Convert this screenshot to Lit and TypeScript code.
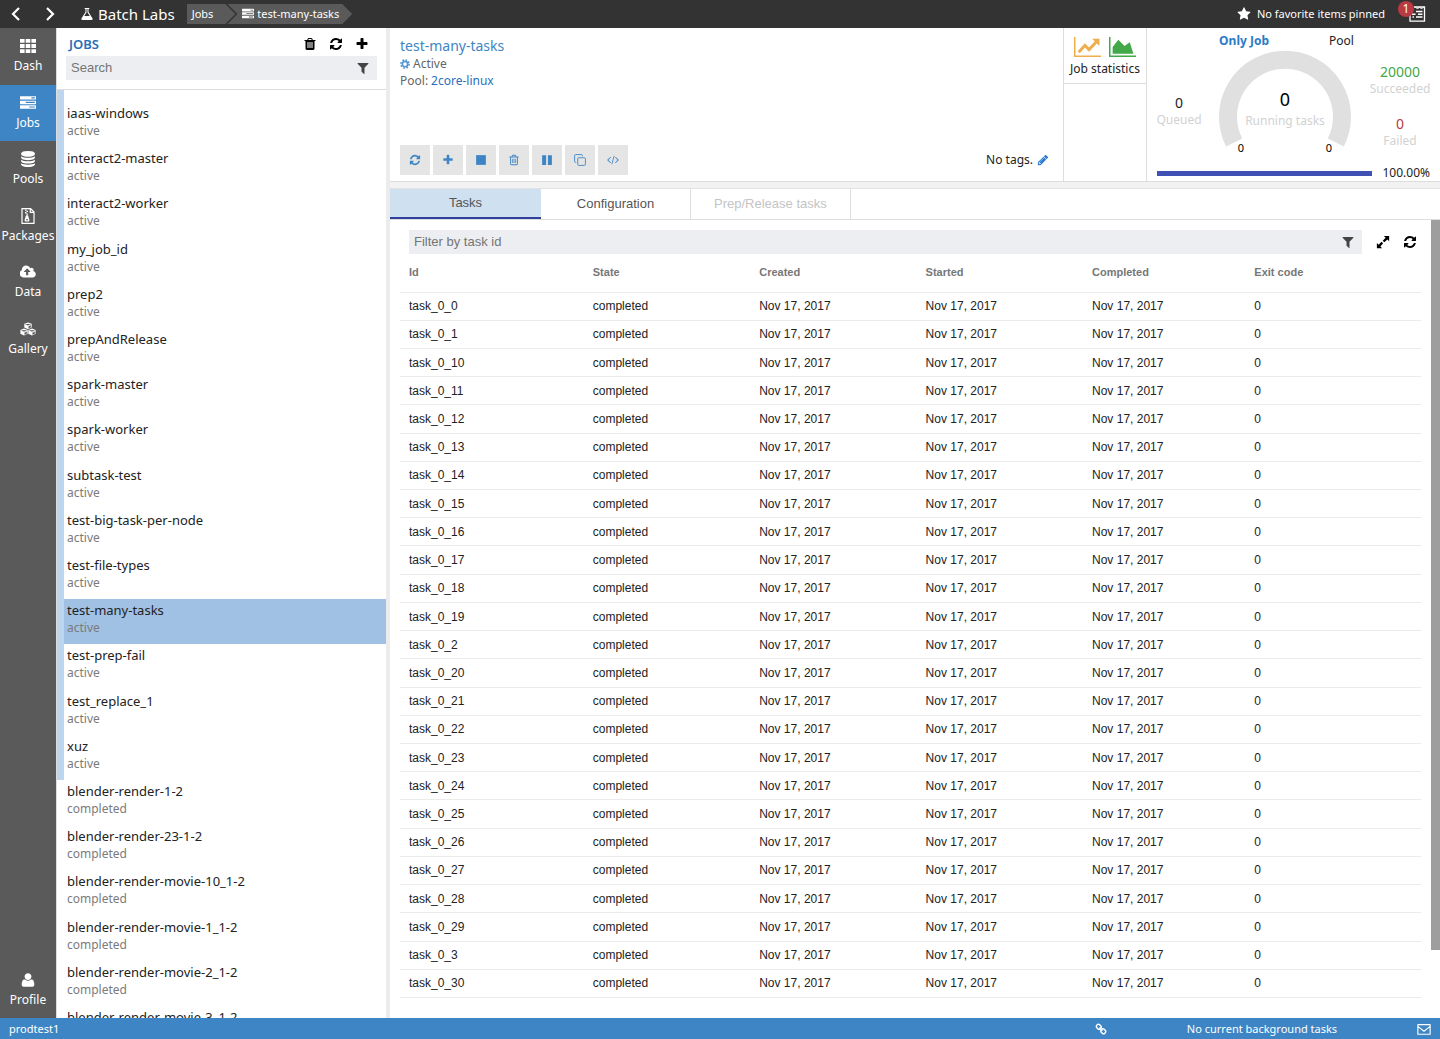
import { LitElement, html, css, svg, nothing } from "lit";
import { customElement, property } from "lit/decorators.js";
import { classMap } from "lit/directives/class-map.js";

const icons: Record<string, { box: string; body: unknown }> = {
  back: { box: "0 0 16 16", body: svg`<path d="M11 2L5 8l6 6" fill="none" stroke="currentColor" stroke-width="2.2"/>` },
  forward: { box: "0 0 16 16", body: svg`<path d="M5 2l6 6-6 6" fill="none" stroke="currentColor" stroke-width="2.2"/>` },
  flask: { box: "0 0 1792 1792", body: svg`<path d="M1591 1448q56 89 21.500 152.500t-140.500 63.500h-1152q-106 0-140.500-63.500t21.500-152.500l503-793v-399h-64q-26 0-45-19t-19-45 19-45 45-19h512q26 0 45 19t19 45-19 45-45 19h-64v399zm-779-725l-272 429h712l-272-429-20-31v-436h-128v436z"/>` },
  tasks: { box: "0 0 1792 1792", body: svg`<path d="M1024 1408h640v-128h-640v128zm-384-512h1024v-128h-1024v128zm640-512h384v-128h-384v128zm512 832v256q0 26-19 45t-45 19h-1664q-26 0-45-19t-19-45v-256q0-26 19-45t45-19h1664q26 0 45 19t19 45zm0-512v256q0 26-19 45t-45 19h-1664q-26 0-45-19t-19-45v-256q0-26 19-45t45-19h1664q26 0 45 19t19 45zm0-512v256q0 26-19 45t-45 19h-1664q-26 0-45-19t-19-45v-256q0-26 19-45t45-19h1664q26 0 45 19t19 45z"/>` },
  star: { box: "0 0 1792 1792", body: svg`<path d="M1728 647q0 22-26 48l-363 354 86 500q1 7 1 20 0 21-10.500 35.500t-30.500 14.500q-19 0-40-12l-449-236-449 236q-22 12-40 12-21 0-31.500-14.500t-10.500-35.500q0-6 2-20l86-500-364-354q-25-27-25-48 0-37 56-46l502-73 225-455q19-41 49-41t49 41l225 455 502 73q56 9 56 46z"/>` },
  news: { box: "0 0 18 18", body: svg`<g fill="none" stroke="currentColor" stroke-width="1.300"><path d="M2 9v7.200h14.500V2H6"/><path d="M8 6.500h6.500M10 9.300h4.500M8 12.100h6.500" stroke-width="1.500"/><path d="M4 9.300h3.500M4.500 12.100h1.500" stroke-width="1.500"/><path d="M7.500 2l2 2 2-2 2 2 2-2" stroke-width="1"/></g>` },
  th: { box: "0 0 16 16", body: svg`<path d="M0 1h4.600v3.800H0zM5.700 1h4.600v3.800H5.700zM11.400 1H16v3.800h-4.600zM0 6.100h4.600v3.800H0zM5.700 6.100h4.600v3.800H5.700zM11.400 6.100H16v3.800h-4.600zM0 11.200h4.600V15H0zM5.700 11.200h4.600V15H5.700zM11.400 11.200H16V15h-4.600z"/>` },
  database: { box: "0 0 1792 1792", body: svg`<path d="M896 768q237 0 443-43t325-127v170q0 69-103 128t-280 93.500-385 34.500-385-34.500-280-93.500-103-128v-170q119 84 325 127t443 43zm0 768q237 0 443-43t325-127v170q0 69-103 128t-280 93.500-385 34.500-385-34.500-280-93.500-103-128v-170q119 84 325 127t443 43zm0-384q237 0 443-43t325-127v170q0 69-103 128t-280 93.500-385 34.500-385-34.500-280-93.500-103-128v-170q119 84 325 127t443 43zm0-1152q208 0 385 34.500t280 93.500 103 128v128q0 69-103 128t-280 93.500-385 34.500-385-34.500-280-93.500-103-128v-128q0-69 103-128t280-93.500 385-34.500z"/>` },
  archive: { box: "0 0 16 16", body: svg`<path d="M2 .6h8.600L14 4v11.400H2zM10.300.8v3.600H14" fill="none" stroke="currentColor" stroke-width="1.200"/><path d="M5 1.500h1.500v1.300H5zM6.500 2.800H8v1.300H6.500zM5 4.100h1.500v1.300H5zM6.500 5.400H8v1.300H6.500zM6 7.200h2l1.300 4.200a1.500 1.500 0 0 1-1.500 2.200H6.200a1.500 1.500 0 0 1-1.500-2.200zM6 11.300h2v1H6z" fill-rule="evenodd"/>` },
  cloud: { box: "-20 0 1900 1792", body: svg`<path d="M1216 864q0-14-9-23l-352-352q-9-9-23-9t-23 9l-351 351q-10 12-10 24 0 14 9 23t23 9h224v352q0 13 9.500 22.500t22.500 9.500h192q13 0 22.500-9.500t9.500-22.500v-352h224q13 0 22.500-9.500t9.500-22.500zm640 288q0 159-112.500 271.500t-271.500 112.500h-1088q-185 0-316.500-131.500t-131.500-316.500q0-130 70-240t188-165q-2-30-2-43 0-212 150-362t362-150q156 0 285.500 87t188.500 231q71-62 166-62 106 0 181 75t75 181q0 76-41 138 130 31 213.500 135.500t83.500 238.500z"/>` },
  cubes: { box: "0 0 16 16", body: svg`<path d="M8 1.400l3.700 1.400v3.700L8 8.300 4.300 6.500V2.800zM4 7.400l3.700 1.500v3.800L4 14.500.4 12.700V8.900zM12 7.400l3.600 1.500v3.800L12 14.500l-3.700-1.800V8.900z"/><path d="M5.200 3.100L8 4.300l2.800-1.200M1.300 9.200L4 10.400l2.700-1.200M9.300 9.200l2.700 1.200 2.700-1.200M8.700 5.600v1.700l2-1V4.600zM4.700 11.800v1.700l2-1v-1.700zM12.700 11.800v1.700l2-1v-1.700z" fill="#5a5a5a" stroke="#5a5a5a" stroke-width=".4"/>` },
  user: { box: "0 0 1792 1792", body: svg`<path d="M1600 1405q0 120-73 189.500t-194 69.500h-874q-121 0-194-69.500t-73-189.500q0-53 3.500-103.500t14-109 26.500-108.500 43-97.500 62-81 85.500-53.500 111.500-20q9 0 42 21.500t74.500 48 108 48 133.500 21.500 133.500-21.500 108-48 74.500-48 42-21.500q61 0 111.500 20t85.500 53.500 62 81 43 97.500 26.500 108.500 14 109 3.500 103.500zm-320-893q0 159-112.500 271.500t-271.500 112.500-271.500-112.500-112.500-271.500 112.500-271.500 271.500-112.500 271.500 112.500 112.500 271.500z"/>` },
  trash: { box: "0 0 1792 1792", body: svg`<path d="M704 1376v-704q0-14-9-23t-23-9h-64q-14 0-23 9t-9 23v704q0 14 9 23t23 9h64q14 0 23-9t9-23zm256 0v-704q0-14-9-23t-23-9h-64q-14 0-23 9t-9 23v704q0 14 9 23t23 9h64q14 0 23-9t9-23zm256 0v-704q0-14-9-23t-23-9h-64q-14 0-23 9t-9 23v704q0 14 9 23t23 9h64q14 0 23-9t9-23zm-544-992h448l-48-117q-7-9-17-11h-317q-10 2-17 11zm928 32v64q0 14-9 23t-23 9h-96v948q0 83-47 143.500t-113 60.500h-832q-66 0-113-58.500t-47-141.500v-952h-96q-14 0-23-9t-9-23v-64q0-14 9-23t23-9h309l70-167q15-37 54-63t79-26h320q40 0 79 26t54 63l70 167h309q14 0 23 9t9 23z"/>` },
  trashOpen: { box: "0 0 1792 1792", body: svg`<path d="M704 736v576q0 14-9 23t-23 9h-64q-14 0-23-9t-9-23v-576q0-14 9-23t23-9h64q14 0 23 9t9 23zm256 0v576q0 14-9 23t-23 9h-64q-14 0-23-9t-9-23v-576q0-14 9-23t23-9h64q14 0 23 9t9 23zm256 0v576q0 14-9 23t-23 9h-64q-14 0-23-9t-9-23v-576q0-14 9-23t23-9h64q14 0 23 9t9 23zm128 724v-948h-896v948q0 22 7 40.500t14.500 27 10.500 8.500h832q3 0 10.500-8.500t14.500-27 7-40.500zm-672-1076h448l-48-117q-7-9-17-11h-317q-10 2-17 11zm928 32v64q0 14-9 23t-23 9h-96v948q0 83-47 143.500t-113 60.500h-832q-66 0-113-58.500t-47-141.500v-952h-96q-14 0-23-9t-9-23v-64q0-14 9-23t23-9h309l70-167q15-37 54-63t79-26h320q40 0 79 26t54 63l70 167h309q14 0 23 9t9 23z"/>` },
  refresh: { box: "0 0 1792 1792", body: svg`<path d="M1639 1056q0 5-1 7-64 268-268 434.500t-478 166.500q-146 0-282.500-55t-243.500-157l-129 129q-19 19-45 19t-45-19-19-45v-448q0-26 19-45t45-19h448q26 0 45 19t19 45-19 45l-137 137q71 66 161 102t187 36q134 0 250-65t186-179q11-17 53-117 8-23 30-23h192q13 0 22.500 9.500t9.500 22.500zm25-800v448q0 26-19 45t-45 19h-448q-26 0-45-19t-19-45 19-45l138-138q-148-137-349-137-134 0-250 65t-186 179q-11 17-53 117-8 23-30 23h-199q-13 0-22.500-9.500t-9.500-22.500v-7q65-268 270-434.500t480-166.500q146 0 284 55.500t245 156.500l130-129q19-19 45-19t45 19 19 45z"/>` },
  plus: { box: "0 0 1792 1792", body: svg`<path d="M1600 736v192q0 40-28 68t-68 28h-416v416q0 40-28 68t-68 28h-192q-40 0-68-28t-28-68v-416h-416q-40 0-68-28t-28-68v-192q0-40 28-68t68-28h416v-416q0-40 28-68t68-28h192q40 0 68 28t28 68v416h416q40 0 68 28t28 68z"/>` },
  filter: { box: "0 0 1792 1792", body: svg`<path d="M1595 295q17 41-14 70l-493 493v742q0 42-39 59-13 5-25 5-27 0-45-19l-256-256q-19-19-19-45v-486l-493-493q-31-29-14-70 17-39 59-39h1280q42 0 59 39z"/>` },
  gear: { box: "0 0 16 16", body: svg`<circle cx="8" cy="8" r="4.300" fill="none" stroke="currentColor" stroke-width="2.600"/><circle cx="8" cy="8" r="6.500" fill="none" stroke="currentColor" stroke-width="2.600" stroke-dasharray="2.600 2.505"/>` },
  stop: { box: "0 0 16 16", body: svg`<path d="M1.500 1.500h13v13h-13z"/>` },
  pause: { box: "0 0 16 16", body: svg`<path d="M1.500 1.500h5.300v13H1.500zM9.200 1.500h5.300v13H9.200z"/>` },
  clone: { box: "0 0 16 16", body: svg`<rect x="5" y="5" width="10.200" height="10.200" rx="1.200" fill="none" stroke="currentColor" stroke-width="1.200"/><path d="M3 11.200H2A1.200 1.200 0 0 1 .8 10V2A1.200 1.200 0 0 1 2 .8h8A1.200 1.200 0 0 1 11.200 2v1" fill="none" stroke="currentColor" stroke-width="1.200"/>` },
  code: { box: "64 0 1920 1920", body: svg`<path d="M681 1399l-50 50q-10 10-23 10t-23-10l-466-466q-10-10-10-23t10-23l466-466q10-10 23-10t23 10l50 50q10 10 10 23t-10 23l-393 393 393 393q10 10 10 23t-10 23zm591-1067l-373 1291q-4 13-15.500 19.500t-23.500 2.500l-62-17q-13-4-19.500-15.500t-2.500-24.500l373-1291q4-13 15.500-19.500t23.500-2.500l62 17q13 4 19.500 15.500t2.500 24.500zm657 651l-466 466q-10 10-23 10t-23-10l-50-50q-10-10-10-23t10-23l393-393-393-393q-10-10-10-23t10-23l50-50q10-10 23-10t23 10l466 466q10 10 10 23t-10 23z"/>` },
  pencil: { box: "0 0 1792 1792", body: svg`<path d="M491 1536l91-91-235-235-91 91v107h128v128h107zm523-928q0-22-22-22-10 0-17 7l-542 542q-7 7-7 17 0 22 22 22 10 0 17-7l542-542q7-7 7-17zm-54-192l416 416-832 832h-416v-416zm683 96q0 53-37 90l-166 166-416-416 166-165q36-38 90-38 53 0 91 38l235 234q37 39 37 91z"/>` },
  lineChart: { box: "0 0 26 20", body: svg`<path d="M.7 0v18.500H26" fill="none" stroke="currentColor" stroke-width="1.500"/><path d="M4.500 14.500l6-6.500 4 4L22 4" fill="none" stroke="currentColor" stroke-width="2.800"/><path d="M17.500 1.500h7v7z"/>` },
  areaChart: { box: "0 0 26 20", body: svg`<path d="M.7 0v18.500H26" fill="none" stroke="currentColor" stroke-width="1.500"/><path d="M3.500 16V9.500L9 2.500l6 6L20 5l3.500 11z"/>` },
  expand: { box: "0 0 16 16", body: svg`<path d="M9 1h6v6l-2-2-3.500 3.300-1.800-1.800L11 3zM7 15H1V9l2 2 3.300-3.300 1.800 1.800L5 13z"/>` },
  link: { box: "0 0 16 16", body: svg`<g fill="none" stroke="currentColor" stroke-width="1.900"><rect x="1.700" y="2.300" width="6.600" height="5.400" rx="2.400" transform="rotate(45 5 5)"/><rect x="7.700" y="8.300" width="6.600" height="5.400" rx="2.400" transform="rotate(45 11 11)"/><path d="M6 6l4 4"/></g>` },
  mail: { box: "0 0 16 16", body: svg`<path d="M1 3h14v11H1zM1 5l7 5.500L15 5" fill="none" stroke="currentColor" stroke-width="1.300" stroke-linejoin="round"/>` },
};

@customElement("ui-icon")
class UiIcon extends LitElement {
  @property() name = "";
  static styles = css`
    :host { display: inline-flex; width: 14px; height: 14px; flex: none; }
    svg { width: 100%; height: 100%; fill: currentColor; display: block; }
  `;
  render() {
    const icon = icons[this.name];
    return icon ? html`<svg viewBox=${icon.box} aria-hidden="true">${icon.body}</svg>` : nothing;
  }
}

const navItems = [
  ["Dash", "th"], ["Jobs", "tasks"], ["Pools", "database"],
  ["Packages", "archive"], ["Data", "cloud"], ["Gallery", "cubes"],
];
const activeJobs = [
  "iaas-windows", "interact2-master", "interact2-worker", "my_job_id", "prep2",
  "prepAndRelease", "spark-master", "spark-worker", "subtask-test",
  "test-big-task-per-node", "test-file-types", "test-many-tasks",
  "test-prep-fail", "test_replace_1", "xuz",
];
const completedJobs = [
  "blender-render-1-2", "blender-render-23-1-2", "blender-render-movie-10_1-2",
  "blender-render-movie-1_1-2", "blender-render-movie-2_1-2", "blender-render-movie-3_1-2",
];
const taskNumbers = [0, 1, 10, 11, 12, 13, 14, 15, 16, 17, 18, 19, 2, 20, 21, 22, 23, 24, 25, 26, 27, 28, 29, 3, 30];
const date = "Nov 17, 2017";
const commands = [
  ["Refresh", "refresh"], ["Add", "plus"], ["Terminate", "stop"], ["Delete", "trashOpen"],
  ["Disable", "pause"], ["Clone", "clone"], ["Edit JSON", "code"],
];

@customElement("app-root")
class AppRoot extends LitElement {
  static styles = css`
    :host {
      display: flex; flex-direction: column; height: 100vh; overflow: hidden;
      font: 12px/16px "Noto Sans", sans-serif; color: #222; background: #fff;
    }
    * { box-sizing: border-box; }
    button, input { font: inherit; color: inherit; border: 0; margin: 0; padding: 0; background: none; border-radius: 0; }
    button { cursor: pointer; }
    a { color: inherit; text-decoration: none; }
    h1, h2, p, ul { margin: 0; padding: 0; font-weight: 400; list-style: none; }

    .topbar { flex: none; height: 28px; display: flex; align-items: center; background: #333; color: #fff; padding: 0 14px 0 8px; font-size: 11px; }
    .history { display: flex; gap: 18px; margin-right: 22px; }
    .history button { display: flex; }
    .history ui-icon { width: 16px; height: 16px; }
    .brand { display: flex; align-items: center; gap: 4px; font-size: 15px; line-height: 20px; margin-right: 12px; }
    .crumbs { display: flex; }
    .crumb { display: flex; align-items: center; gap: 3px; height: 20px; background: #5a5a5a; padding: 0 13px 0 15px; margin-left: -8px;
      clip-path: polygon(0 0, calc(100% - 10px) 0, 100% 50%, calc(100% - 10px) 100%, 0 100%, 10px 50%); }
    .crumb.first { margin-left: 0; padding: 0 22px 0 5px; clip-path: polygon(0 0, calc(100% - 10px) 0, 100% 50%, calc(100% - 10px) 100%, 0 100%); }
    .crumb ui-icon { width: 12px; height: 12px; }
    .pinned { margin-left: auto; display: flex; align-items: center; gap: 6px; }
    .notes { position: relative; display: flex; margin-left: 23px; }
    .notes ui-icon { width: 18px; height: 18px; }
    .badge { position: absolute; left: -10px; top: -4px; width: 16px; height: 16px; border-radius: 50%; background: #b93a42; color: #fff; font-size: 12px; line-height: 16px; }

    .body { flex: 1; min-height: 0; display: flex; }
    .nav { flex: none; width: 56px; background: #5a5a5a; color: #fff; display: flex; flex-direction: column; justify-content: space-between; }
    .nav-main { display: grid; grid-auto-rows: 1fr; height: 339px; }
    .nav a { display: flex; flex-direction: column; align-items: center; justify-content: center; gap: 4px; }
    .nav ui-icon { width: 16px; height: 16px; }
    .nav a.current { background: #3e85c5; }
    .nav .profile { padding-bottom: 10px; }

    .jobs { flex: none; width: 334px; display: flex; flex-direction: column; border-left: 1px solid #ddd; border-right: 4px solid #ececec; }
    .jobs-head { flex: none; height: 62px; padding: 8px 9px 0; border-bottom: 1px solid #ddd; }
    .jobs-title { display: flex; align-items: center; gap: 12px; height: 16px; margin-bottom: 4px; padding: 0 8px 0 3px; color: #000; }
    .jobs-title h2 { font-size: 13px; font-weight: 600; color: #2a6eb8; margin-right: auto; }
    .jobs-title button { display: flex; }
    .field { display: flex; align-items: center; height: 24px; background: #eceef1; color: #444; padding: 0 7px 0 5px; }
    .field input { flex: 1; min-width: 0; outline: 0; font: 13px/16px "Liberation Sans", sans-serif; }
    .field input::placeholder { color: #757575; opacity: 1; }
    .field button { display: flex; }
    .list { flex: 1; min-height: 0; overflow: hidden; }
    .group { display: grid; grid-auto-rows: 1fr; border-left: 7px solid transparent; }
    .group.active { height: 690px; padding-top: 12px; border-color: #bdd5ee; }
    .group.done { height: 271px; }
    .job { display: block; padding: 2px 3px 0; font-size: 13px; line-height: 18px; }
    .job.selected { background: #a0c1e4; }
    .job small { display: block; font-size: 12px; line-height: 17px; color: #7b7b7b; }

    .main { flex: 1; min-width: 0; display: flex; flex-direction: column; background: #f2f2f2; gap: 6px; }
    .summary { flex: none; height: 154px; display: flex; background: #fff; border-bottom: 1px solid #ddd; }
    .details { flex: 1; display: flex; flex-direction: column; justify-content: space-between; padding: 9px 14px 6px 10px; }
    .details h1 { font-size: 14px; line-height: 18px; color: #3e85c5; }
    .details p { display: flex; align-items: center; gap: 3px; line-height: 17px; color: #666; }
    .details p ui-icon { width: 10px; height: 10px; color: #5295d2; }
    .details p a { color: #2a70c0; }
    .commands { display: flex; align-items: center; gap: 3px; }
    .command { width: 30px; height: 30px; display: flex; align-items: center; justify-content: center; background: #e5e5e5; color: #3e85c5; }
    .commands ui-icon { width: 12px; height: 12px; }
    .tags { margin-left: auto; display: flex; align-items: center; gap: 4px; }
    .tags button { display: flex; color: #2a7bd0; }
    .charts { flex: none; width: 84px; border: solid #ddd; border-width: 0 1px; }
    .charts button { width: 100%; height: 56px; padding-top: 3px; border-bottom: 1px solid #ddd; }
    .charts span { display: flex; justify-content: center; gap: 8px; margin-bottom: 3px; }
    .charts ui-icon { width: 27px; height: 21px; }
    .orange { color: #f0ad4e; }
    .green { color: #43a847; }
    .red { color: #b93a42; }
    .stats { flex: none; width: 293px; padding: 5px 10px 0; display: flex; flex-direction: column; }
    .scopes { display: flex; justify-content: center; gap: 60px; padding-right: 14px; }
    .scopes b { color: #2a7bc8; font-weight: 700; }
    .figures { display: flex; height: 108px; }
    .figures > div { display: flex; flex-direction: column; align-items: center; text-align: center; }
    .queued { width: 44px; justify-content: center; padding-top: 16px; font-size: 14px; line-height: 18px; }
    .figures small { display: block; font-size: 12px; line-height: 16px; color: #d2d2d2; }
    .figures svg { width: 138px; height: 108px; margin-left: 15px; flex: none; }
    .results { flex: 1; gap: 18px; padding-top: 14px; margin: 0 -8px 0 8px; font-size: 14px; line-height: 18px; }
    .progress { display: flex; align-items: center; gap: 10px; margin-top: 8px; }
    .track { flex: 1; height: 5px; background: #c5cae9; }
    .bar { height: 100%; background: #3f51b5; }

    .pane { flex: 1; min-height: 0; display: flex; flex-direction: column; background: #fff; border-top: 1px solid #e2e2e2; }
    .tabs { flex: none; height: 31px; display: flex; border-bottom: 1px solid #ddd; font: 13px/16px "Liberation Sans", sans-serif; color: #555; }
    .tabs button { min-width: 150px; padding: 0 23px; border-right: 1px solid #ddd; }
    .tabs button.on { min-width: 151px; background: #cfe0f0; border-right: 0; border-bottom: 2px solid #303f9f; }
    .tabs button:disabled { color: #c4c4c4; cursor: default; }
    .scroll { flex: 1; min-height: 0; display: flex; }
    .content { flex: 1; min-width: 0; display: flex; flex-direction: column; padding: 10px 10px 20px; }
    .tools { flex: none; display: flex; align-items: center; gap: 13px; padding: 0 4px 0 9px; color: #000; }
    .tools > button { display: flex; }
    .tools .field { flex: 1; margin-right: 1px; }
    .table-box { flex: 1; min-height: 0; }
    table { width: 100%; height: 100%; border-collapse: collapse; table-layout: fixed; font: 12px/16px "Liberation Sans", sans-serif; text-align: left; }
    th, td { padding: 0 9px; border-bottom: 1px solid #ebebeb; }
    th { height: 38px; padding-bottom: 2px; font-size: 11px; font-weight: 700; color: #777; }
    .c-id { width: 18%; }
    .c-mid { width: 16.3%; }
    .c-done { width: 15.9%; }
    .rail { flex: none; width: 9px; }
    .thumb { height: 730px; max-height: 100%; background: #9e9e9e; }

    .status { flex: none; height: 21px; display: flex; align-items: center; background: #3e85c5; color: #fff; padding: 0 9px; font-size: 11px; }
    .status ui-icon:first-of-type { width: 12px; height: 12px; margin-left: auto; }
    .status .background { width: 310px; text-align: center; }
  `;

  private job(name: string, state: string) {
    return html`<a href="#" class=${classMap({ job: true, selected: name === "test-many-tasks" })}>${name}<small>${state}</small></a>`;
  }

  render() {
    return html`
      <header class="topbar">
        <div class="history">
          <button aria-label="Back"><ui-icon name="back"></ui-icon></button>
          <button aria-label="Forward"><ui-icon name="forward"></ui-icon></button>
        </div>
        <div class="brand"><ui-icon name="flask"></ui-icon>Batch Labs</div>
        <nav class="crumbs">
          <a href="#" class="crumb first">Jobs</a>
          <a href="#" class="crumb"><ui-icon name="tasks"></ui-icon>test-many-tasks</a>
        </nav>
        <button class="pinned"><ui-icon name="star"></ui-icon>No favorite items pinned</button>
        <button class="notes" aria-label="Notifications"><ui-icon name="news"></ui-icon><span class="badge">1</span></button>
      </header>
      <div class="body">
        <nav class="nav">
          <div class="nav-main">
            ${navItems.map(([label, icon]) => html`<a href="#" class=${classMap({ current: label === "Jobs" })}><ui-icon name=${icon}></ui-icon>${label}</a>`)}
          </div>
          <a href="#" class="profile"><ui-icon name="user"></ui-icon>Profile</a>
        </nav>
        <aside class="jobs">
          <div class="jobs-head">
            <div class="jobs-title">
              <h2>JOBS</h2>
              <button aria-label="Delete"><ui-icon name="trash"></ui-icon></button>
              <button aria-label="Refresh"><ui-icon name="refresh"></ui-icon></button>
              <button aria-label="Add"><ui-icon name="plus"></ui-icon></button>
            </div>
            <div class="field">
              <input type="text" placeholder="Search" aria-label="Search" />
              <button aria-label="Filter"><ui-icon name="filter"></ui-icon></button>
            </div>
          </div>
          <div class="list">
            <div class="group active">${activeJobs.map((n) => this.job(n, "active"))}</div>
            <div class="group done">${completedJobs.map((n) => this.job(n, "completed"))}</div>
          </div>
        </aside>
        <main class="main">
          <section class="summary">
            <div class="details">
              <div>
                <h1>test-many-tasks</h1>
                <p><ui-icon name="gear"></ui-icon>Active</p>
                <p>Pool: <a href="#">2core-linux</a></p>
              </div>
              <div class="commands">
                ${commands.map(([label, icon]) => html`<button class="command" aria-label=${label}><ui-icon name=${icon}></ui-icon></button>`)}
                <span class="tags">No tags.<button aria-label="Edit tags"><ui-icon name="pencil"></ui-icon></button></span>
              </div>
            </div>
            <div class="charts">
              <button>
                <span><ui-icon class="orange" name="lineChart"></ui-icon><ui-icon class="green" name="areaChart"></ui-icon></span>
                Job statistics
              </button>
            </div>
            <div class="stats">
              <div class="scopes"><button><b>Only Job</b></button><button>Pool</button></div>
              <div class="figures">
                <div class="queued">0<small>Queued</small></div>
                <svg viewBox="0 0 138 108" text-anchor="middle" fill="#000">
                  <path d="M18.200 93.500A57 57 0 1 1 119.800 93.500" fill="none" stroke="#e0e0e0" stroke-width="18"/>
                  <text x="69" y="57" font-size="18">0</text>
                  <text x="69" y="76" font-size="12" fill="#d2d2d2">Running tasks</text>
                  <text x="25" y="103" font-size="11">0</text>
                  <text x="113" y="103" font-size="11">0</text>
                </svg>
                <div class="results">
                  <span class="green">20000<small>Succeeded</small></span>
                  <span class="red">0<small>Failed</small></span>
                </div>
              </div>
              <div class="progress"><div class="track"><div class="bar" style="width:100%"></div></div>100.00%</div>
            </div>
          </section>
          <section class="pane">
            <div class="tabs" role="tablist">
              <button role="tab" class="on" aria-selected="true">Tasks</button>
              <button role="tab">Configuration</button>
              <button role="tab" disabled>Prep/Release tasks</button>
            </div>
            <div class="scroll">
              <div class="content">
                <div class="tools">
                  <div class="field">
                    <input type="text" placeholder="Filter by task id" aria-label="Filter by task id" />
                    <button aria-label="Filter"><ui-icon name="filter"></ui-icon></button>
                  </div>
                  <button aria-label="Expand"><ui-icon name="expand"></ui-icon></button>
                  <button aria-label="Refresh"><ui-icon name="refresh"></ui-icon></button>
                </div>
                <div class="table-box">
                  <table>
                    <thead>
                      <tr>
                        <th class="c-id">Id</th><th class="c-mid">State</th><th class="c-mid">Created</th>
                        <th class="c-mid">Started</th><th class="c-done">Completed</th><th>Exit code</th>
                      </tr>
                    </thead>
                    <tbody>
                      ${taskNumbers.map((n) => html`<tr><td>task_0_${n}</td><td>completed</td><td>${date}</td><td>${date}</td><td>${date}</td><td>0</td></tr>`)}
                    </tbody>
                  </table>
                </div>
              </div>
              <div class="rail"><div class="thumb"></div></div>
            </div>
          </section>
        </main>
      </div>
      <footer class="status">
        <span>prodtest1</span>
        <ui-icon name="link"></ui-icon>
        <span class="background">No current background tasks</span>
        <ui-icon name="mail"></ui-icon>
      </footer>
    `;
  }
}
